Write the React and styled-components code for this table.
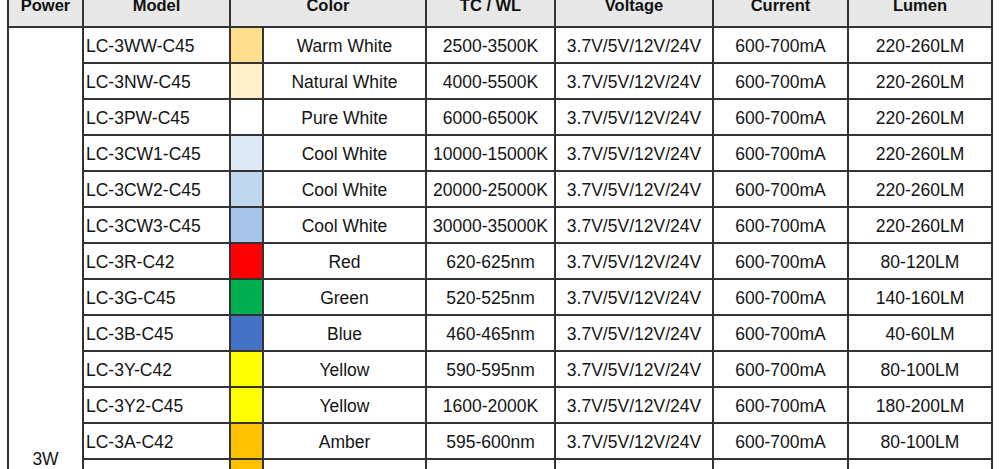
import styled, { createGlobalStyle } from 'styled-components';

const GlobalStyle = createGlobalStyle`
  html, body {
    margin: 0;
    padding: 0;
    background: #fff;
  }
  body {
    font-family: "Liberation Sans", Arial, sans-serif;
  }
`;

const Page = styled.div`
  width: 1000px;
  height: 469px;
  overflow: hidden;
  padding-left: 7px;
  box-sizing: border-box;
  background: #fff;
`;

const Sheet = styled.table`
  border-collapse: collapse;
  table-layout: fixed;
  width: 986px;
  color: #141414;
`;

const HeadCell = styled.th`
  height: 27px;
  padding: 0 0 16px;
  box-sizing: border-box;
  vertical-align: bottom;
  background: #e8e8e8;
  border: 2px solid #333;
  border-top: none;
  font-size: 16.5px;
  font-weight: 700;
  line-height: 10px;
  color: #111;
`;

const Cell = styled.td`
  height: 36px;
  padding: ${(p) => (p.$left ? '3px 0 0 2px' : '3px 0 0')};
  box-sizing: border-box;
  border: 2px solid #333;
  font-size: 17.5px;
  line-height: 1;
  text-align: ${(p) => (p.$left ? 'left' : 'center')};
  white-space: nowrap;
  overflow: hidden;
`;

const Swatch = styled.td`
  border: 2px solid #333;
  background: ${(p) => p.$color};
  padding: 0;
`;

const PowerCell = styled.td`
  border: 2px solid #333;
  padding: 0;
  font-size: 17.5px;
  text-align: center;
  vertical-align: middle;
`;

const widths = [75, 147, 33, 163, 129, 158, 135, 144];

const rows = [
  ['LC-3WW-C45', '#ffdf8e', 'Warm White', '2500-3500K', '220-260LM'],
  ['LC-3NW-C45', '#fff0c9', 'Natural White', '4000-5500K', '220-260LM'],
  ['LC-3PW-C45', '#ffffff', 'Pure White', '6000-6500K', '220-260LM'],
  ['LC-3CW1-C45', '#dde9f5', 'Cool White', '10000-15000K', '220-260LM'],
  ['LC-3CW2-C45', '#bfd6ee', 'Cool White', '20000-25000K', '220-260LM'],
  ['LC-3CW3-C45', '#a6c5e8', 'Cool White', '30000-35000K', '220-260LM'],
  ['LC-3R-C42', '#ff0000', 'Red', '620-625nm', '80-120LM'],
  ['LC-3G-C45', '#00b050', 'Green', '520-525nm', '140-160LM'],
  ['LC-3B-C45', '#4472c4', 'Blue', '460-465nm', '40-60LM'],
  ['LC-3Y-C42', '#ffff00', 'Yellow', '590-595nm', '80-100LM'],
  ['LC-3Y2-C45', '#ffff00', 'Yellow', '1600-2000K', '180-200LM'],
  ['LC-3A-C42', '#ffc000', 'Amber', '595-600nm', '80-100LM'],
  ['LC-3A2-C45', '#ffc000', 'Amber', '1800-2000K', '160-180LM'],
  ['LC-3O-C42', '#ff8c00', 'Orange', '605-610nm', '80-100LM'],
  ['LC-3PK-C45', '#ff99cc', 'Pink', '-', '100-120LM'],
  ['LC-3PL-C42', '#9933ff', 'Purple', '-', '20-40LM'],
  ['LC-3IB-C42', '#00b0f0', 'Ice Blue', '490-495nm', '60-80LM'],
  ['LC-3DR-C42', '#c00000', 'Deep Red', '660-665nm', '-'],
  ['LC-3UV-C42', '#7030a0', 'UV', '395-400nm', '-'],
  ['LC-3IR-C42', '#7f0000', 'IR', '850nm', '-'],
  ['LC-3IR2-C42', '#660000', 'IR', '940nm', '-'],
  ['LC-3FS-C45', '#ff6666', 'Full Spectrum', '380-840nm', '180-200LM'],
  ['LC-3RGB-C45', '#dddddd', 'RGB', 'R/G/B', '80-120LM'],
  ['LC-3WRGB-C45', '#eeeeee', 'W+RGB', '-', '100-140LM'],
];

const App = () => (
  <Page>
    <GlobalStyle />
    <Sheet>
      <colgroup>
        {widths.map((w, i) => (
          <col key={i} style={{ width: w }} />
        ))}
      </colgroup>
      <thead>
        <tr>
          <HeadCell>Power</HeadCell>
          <HeadCell>Model</HeadCell>
          <HeadCell colSpan={2}>Color</HeadCell>
          <HeadCell>TC / WL</HeadCell>
          <HeadCell>Voltage</HeadCell>
          <HeadCell>Current</HeadCell>
          <HeadCell>Lumen</HeadCell>
        </tr>
      </thead>
      <tbody>
        {rows.map(([model, color, name, tc, lumen], i) => (
          <tr key={model}>
            {i === 0 && <PowerCell rowSpan={rows.length}>3W</PowerCell>}
            <Cell $left>{model}</Cell>
            <Swatch $color={color} />
            <Cell>{name}</Cell>
            <Cell>{tc}</Cell>
            <Cell>3.7V/5V/12V/24V</Cell>
            <Cell>600-700mA</Cell>
            <Cell>{lumen}</Cell>
          </tr>
        ))}
      </tbody>
    </Sheet>
  </Page>
);

export default App;
